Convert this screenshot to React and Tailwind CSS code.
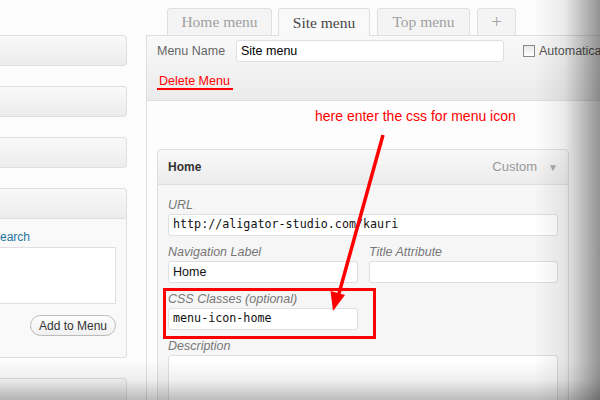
import React from 'react';

function SidePanel({ className = '', children }) {
    return (
        <div className={`shrink-0 border border-l-0 border-[#dfdfdf] rounded-r-[4px] bg-[linear-gradient(to_bottom,#f9f9f9,#ececec)] ${className}`}>
            {children}
        </div>
    );
}

function Tab({ label, active, className = '' }) {
    return (
        <div
            className={`shrink-0 h-[27px] flex items-center justify-center border border-b-0 border-[#dfdfdf] rounded-t-[4px] font-['Liberation_Serif',serif] text-[15.5px] ${
                active ? 'bg-[#f9f9f9] text-[#464646] h-[28px] -mb-px relative z-10' : 'bg-[#f4f4f4] text-[#a0a0a0]'
            } ${className}`}
        >
            {label}
        </div>
    );
}

function Field({ label, value, width, mono }) {
    return (
        <div className={`shrink-0 ${width}`}>
            <div className="h-[17px] leading-[17px] text-[12.5px] italic text-[#777] whitespace-nowrap">{label}</div>
            <div className={`h-[22px] bg-white border border-[#dfdfdf] rounded-[3px] flex items-center px-[4px] text-[#111] ${mono ? "font-['DejaVu_Sans_Mono',monospace] text-[11.7px]" : 'text-[12.5px]'}`}>
                {value}
            </div>
        </div>
    );
}

export default function App() {
    return (
        <div className="relative w-[600px] h-[400px] overflow-hidden bg-[#fcfcfc] font-['Liberation_Sans',Arial,sans-serif]">
            <div className="flex h-full">
                {/* LEFT COLUMN */}
                <div className="w-[127px] shrink-0 pt-[35px] flex flex-col">
                    <SidePanel className="h-[31px]" />
                    <SidePanel className="h-[31px] mt-[20px]" />
                    <SidePanel className="h-[31px] mt-[20px]" />
                    <div className="shrink-0 mt-[20px] border border-l-0 border-[#dfdfdf] rounded-r-[4px] bg-[#f9f9f9] h-[170px]">
                        <div className="h-[30px] border-b border-[#dfdfdf] bg-[linear-gradient(to_bottom,#f9f9f9,#ececec)] rounded-tr-[4px]" />
                        <div className="pt-[10px] pr-[10px]">
                            <div className="h-[16px] leading-[16px] text-[12px] text-[#21759b] -ml-[8px] whitespace-nowrap">Search</div>
                            <div className="mt-[2px] h-[57px] bg-white border border-l-0 border-[#dfdfdf]" />
                            <div className="flex justify-end mt-[11px]">
                                <button className="h-[21px] w-[86px] rounded-full border border-[#bbb] bg-[linear-gradient(to_bottom,#fefefe,#f0f0f0)] text-[12px] text-[#333]">
                                    Add to Menu
                                </button>
                            </div>
                        </div>
                    </div>
                    <SidePanel className="h-[40px] mt-[20px]" />
                </div>

                <div className="w-[19px] shrink-0" />

                {/* RIGHT COLUMN */}
                <div className="flex-1 flex flex-col min-w-0">
                    <div className="h-[35px] flex items-end pl-[21px] shrink-0">
                        <Tab label="Home menu" className="w-[105px]" />
                        <Tab label="Site menu" active className="w-[92px] ml-[6px]" />
                        <Tab label="Top menu" className="w-[93px] ml-[7px]" />
                        <Tab label="+" className="w-[39px] ml-[7px] text-[18px]" />
                    </div>

                    <div className="flex-1 border-t border-l border-[#dfdfdf] bg-[#fdfdfd] flex flex-col">
                        {/* MENU HEADER */}
                        <div className="shrink-0 h-[65px] border-b border-[#dfdfdf] bg-[linear-gradient(to_bottom,#f9f9f9,#ebebeb)] pl-[10px] pt-[4px] overflow-hidden">
                            <div className="flex items-center">
                                <span className="shrink-0 w-[79px] text-[12.5px] text-[#666] whitespace-nowrap">Menu Name</span>
                                <div className="shrink-0 w-[268px] h-[22px] bg-white border border-[#dfdfdf] rounded-[3px] flex items-center px-[4px] text-[12.5px] text-black">
                                    Site menu
                                </div>
                                <div className="shrink-0 ml-[19px] w-[12px] h-[12px] border border-[#888] bg-[linear-gradient(to_bottom,#e8e8e8,#fff)]" />
                                <span className="shrink-0 ml-[4px] text-[12.5px] text-[#555] whitespace-nowrap">Automatically add new top-level pages</span>
                            </div>
                            <div className="flex mt-[12px]">
                                <span className="pl-[2px] pr-[3px] h-[16px] leading-[14px] text-[12.5px] text-[#ff0000] border-b-2 border-[#ff0000]">
                                    Delete Menu
                                </span>
                            </div>
                        </div>

                        {/* MENU ITEMS */}
                        <div className="pl-[10px] pt-[48px]">
                            <div className="w-[412px] border border-[#dfdfdf] rounded-t-[4px] bg-[#f6f6f6] pb-[40px]">
                                <div className="h-[35px] border-b border-[#dfdfdf] bg-[linear-gradient(to_bottom,#f9f9f9,#ececec)] rounded-t-[4px] flex items-center px-[10px]">
                                    <span className="text-[12px] font-bold text-[#333]">Home</span>
                                    <span className="ml-auto text-[13px] text-[#999]">Custom</span>
                                    <span className="ml-[11px] text-[10px] text-[#aaa]">▼</span>
                                </div>
                                <div className="px-[10px] pt-[12px] flex flex-col gap-[8px]">
                                    <Field label="URL" value="http://aligator-studio.com/kauri" width="w-[390px]" mono />
                                    <div className="flex gap-[11px]">
                                        <Field label="Navigation Label" value="Home" width="w-[190px]" />
                                        <Field label="Title Attribute" value="" width="w-[189px]" />
                                    </div>
                                    <Field label="CSS Classes (optional)" value="menu-icon-home" width="w-[190px]" mono />
                                    <div className="w-[390px]">
                                        <div className="h-[17px] leading-[17px] text-[12.5px] italic text-[#777]">Description</div>
                                        <div className="h-[60px] bg-white border border-[#dfdfdf] rounded-[3px]" />
                                    </div>
                                </div>
                            </div>
                        </div>
                    </div>
                </div>
            </div>

            {/* ANNOTATION */}
            <div className="absolute left-[315px] top-[108px] text-[14px] leading-[17px] text-[#ff0000] whitespace-nowrap">
                here enter the css for menu icon
            </div>
            <div className="absolute left-[163px] top-[288px] w-[213px] h-[51px] border-[3px] border-[#ff0000]" />
            <svg className="absolute inset-0 pointer-events-none" width="600" height="400" viewBox="0 0 600 400">
                <line x1="383" y1="135" x2="338" y2="297" stroke="#ff0000" strokeWidth="3.5" />
                <polygon points="333,311 330.5,291 345,295" fill="#ff0000" />
            </svg>

            {/* VIGNETTE */}
            <div className="absolute inset-0 pointer-events-none bg-[linear-gradient(to_right,transparent_89%,rgba(0,0,0,0.07)_94%,rgba(0,0,0,0.42))]" />
            <div className="absolute inset-0 pointer-events-none bg-[linear-gradient(to_bottom,transparent_90%,rgba(0,0,0,0.06)_95%,rgba(0,0,0,0.26))]" />
        </div>
    );
}
